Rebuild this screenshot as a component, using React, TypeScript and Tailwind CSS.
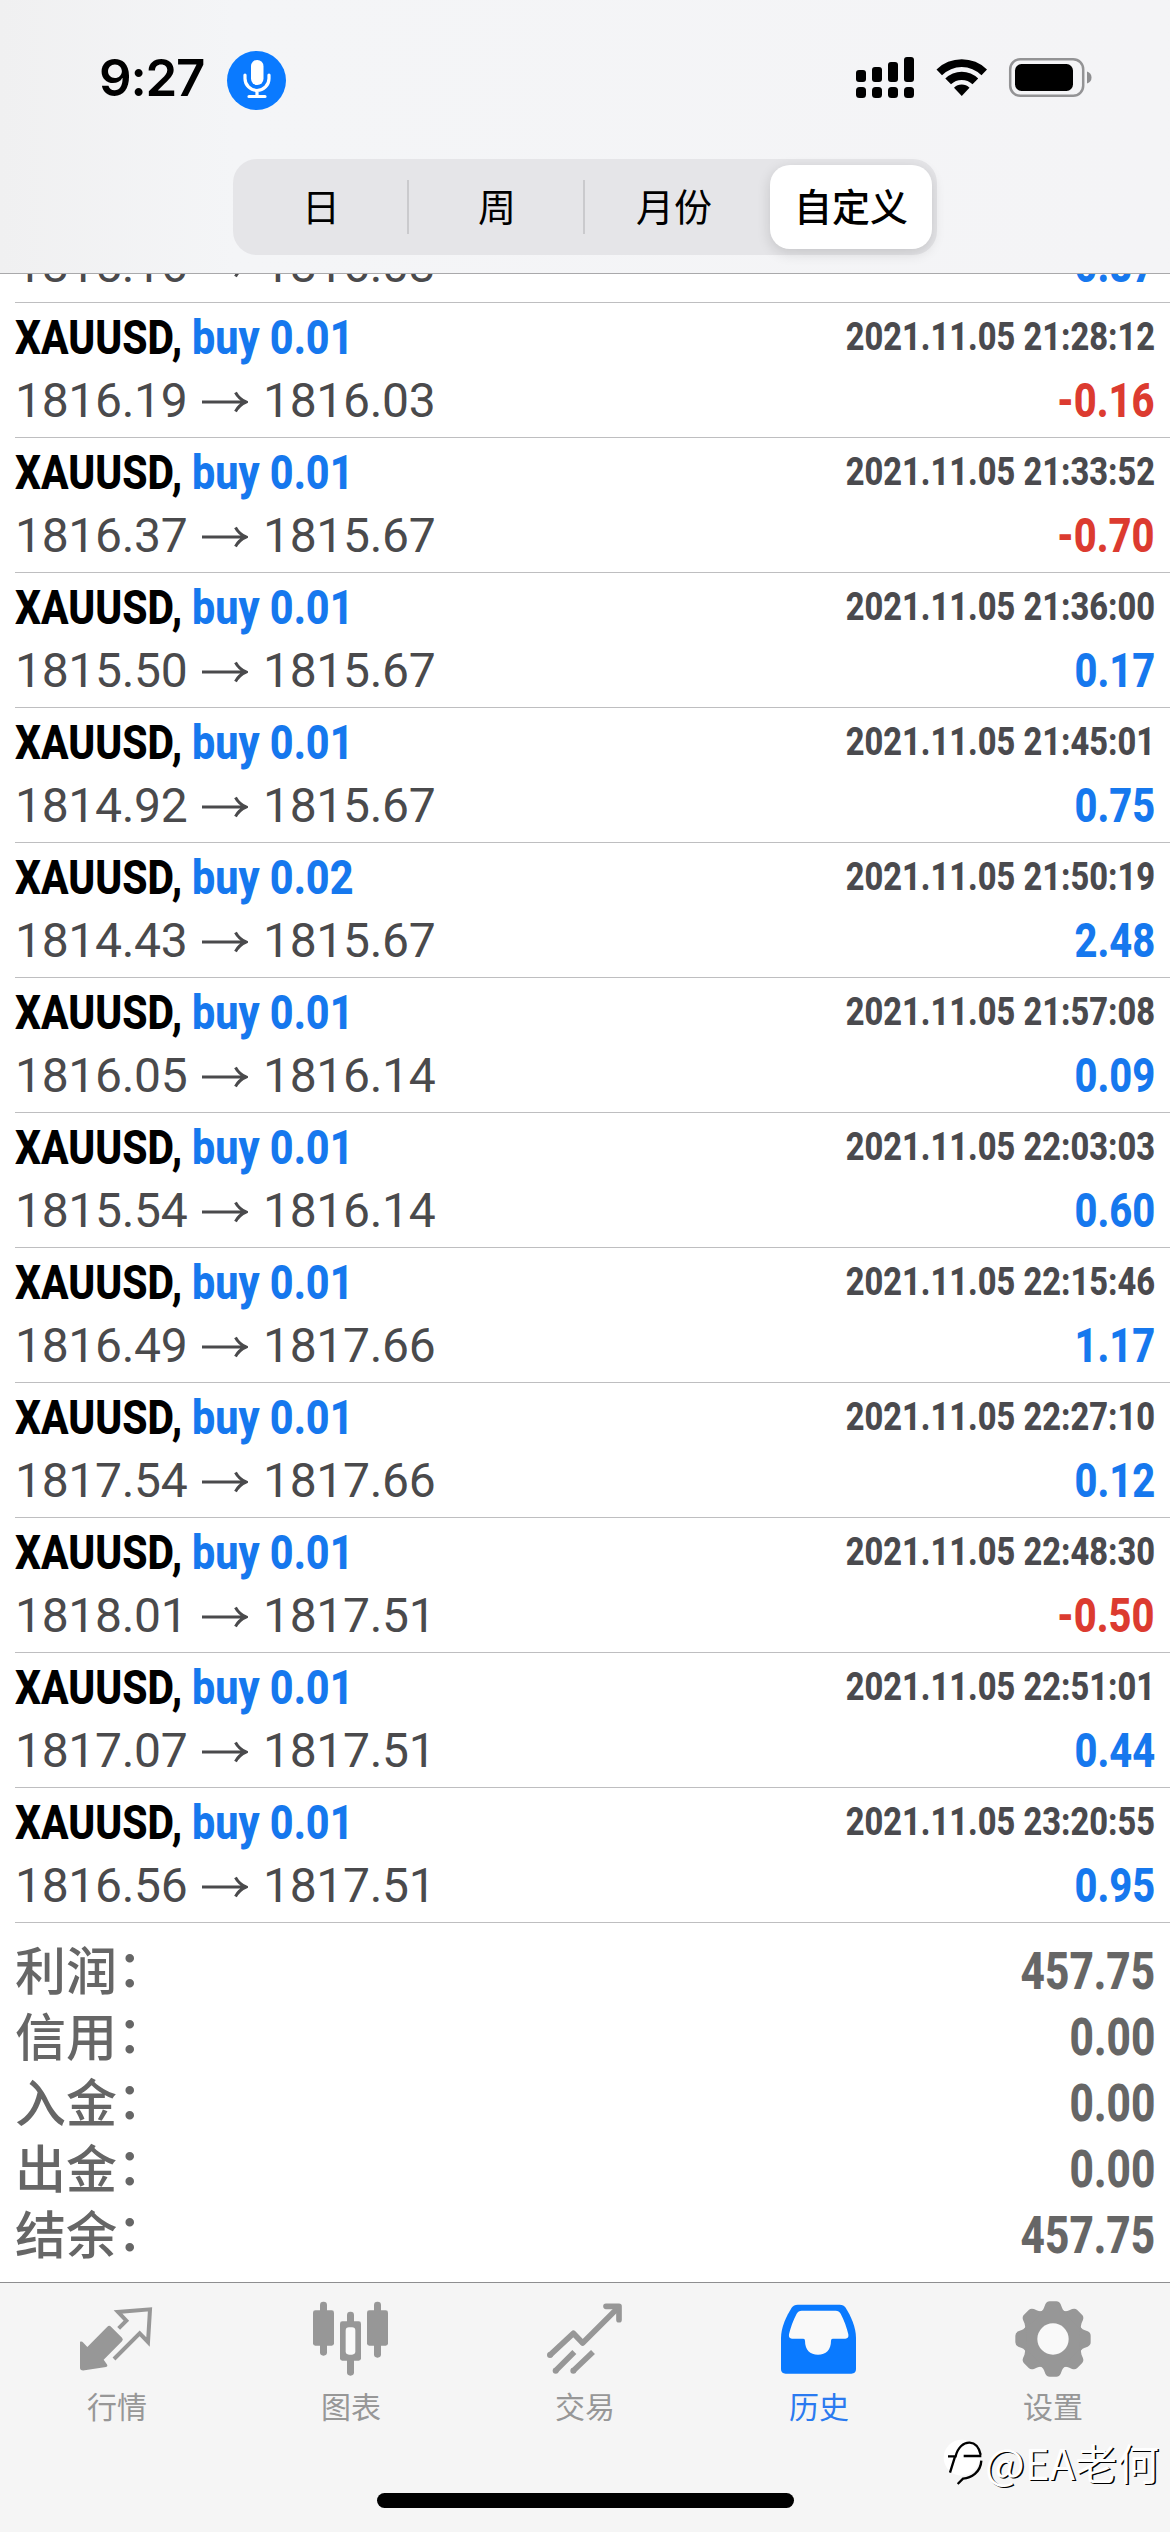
import type { ReactNode } from "react";

type Deal = { vol: string; time: string; open: string; close: string; profit: string };

const deals: Deal[] = [
  { vol: "0.01", time: "2021.11.05 21:28:12", open: "1816.19", close: "1816.03", profit: "-0.16" },
  { vol: "0.01", time: "2021.11.05 21:33:52", open: "1816.37", close: "1815.67", profit: "-0.70" },
  { vol: "0.01", time: "2021.11.05 21:36:00", open: "1815.50", close: "1815.67", profit: "0.17" },
  { vol: "0.01", time: "2021.11.05 21:45:01", open: "1814.92", close: "1815.67", profit: "0.75" },
  { vol: "0.02", time: "2021.11.05 21:50:19", open: "1814.43", close: "1815.67", profit: "2.48" },
  { vol: "0.01", time: "2021.11.05 21:57:08", open: "1816.05", close: "1816.14", profit: "0.09" },
  { vol: "0.01", time: "2021.11.05 22:03:03", open: "1815.54", close: "1816.14", profit: "0.60" },
  { vol: "0.01", time: "2021.11.05 22:15:46", open: "1816.49", close: "1817.66", profit: "1.17" },
  { vol: "0.01", time: "2021.11.05 22:27:10", open: "1817.54", close: "1817.66", profit: "0.12" },
  { vol: "0.01", time: "2021.11.05 22:48:30", open: "1818.01", close: "1817.51", profit: "-0.50" },
  { vol: "0.01", time: "2021.11.05 22:51:01", open: "1817.07", close: "1817.51", profit: "0.44" },
  { vol: "0.01", time: "2021.11.05 23:20:55", open: "1816.56", close: "1817.51", profit: "0.95" },
];

const totals = [
  ["利润", "457.75"],
  ["信用", "0.00"],
  ["入金", "0.00"],
  ["出金", "0.00"],
  ["结余", "457.75"],
];

function PriceLine({ open, close, profit }: { open: string; close: string; profit: string }) {
  return (
    <div className="flex h-[60px] items-center justify-between pr-[15px] text-[48px] leading-[60px]">
      <div className="flex items-center tracking-[-0.3px] text-[#4a4a4c]">
        <span className="w-[187px]">{open}</span>
        <svg viewBox="0 0 46 22" className="mt-[2px] mr-[15px] h-[22px] w-[46px]" fill="none" stroke="#4a4a4c" strokeWidth="3">
          <path d="M0 11H44M33.500 1.500Q37 8 44 11Q37 14 33.500 20.500" />
        </svg>
        <span>{close}</span>
      </div>
      <span
        className={`origin-right scale-x-[0.83] font-extrabold ${profit.startsWith("-") ? "text-[#dc3b30]" : "text-[#1678ee]"}`}
      >
        {profit}
      </span>
    </div>
  );
}

function DealRow({ deal }: { deal: Deal }) {
  return (
    <div className="ml-[15px] h-[135px] shrink-0 border-b border-[#bebec0] pt-[4px]">
      <div className="flex h-[64px] items-start justify-between pr-[15px] font-extrabold leading-[62px]">
        <div className="flex text-[48px]">
          <span className="w-[177px] origin-left scale-x-[0.85] whitespace-nowrap text-black">XAUUSD,</span>
          <span className="origin-left scale-x-[0.86] whitespace-nowrap text-[#1678ee]">buy {deal.vol}</span>
        </div>
        <span className="-mt-px origin-right scale-x-[0.825] whitespace-nowrap text-[39.5px] font-extrabold text-[#4a4a4e]">
          {deal.time}
        </span>
      </div>
      <PriceLine open={deal.open} close={deal.close} profit={deal.profit} />
    </div>
  );
}

function StatusBar() {
  const bars = [70, 67, 62, 57];
  return (
    <div className="flex h-[159px] items-start">
      <div className="ml-[99px] mt-[48px] w-[128px] font-['Inter'] text-[51px] font-semibold leading-[60px] tracking-[-1.2px] text-black">
        9:27
      </div>
      <div className="mt-[51px] flex size-[59px] items-center justify-center rounded-full bg-[#0a7aff]">
        <svg viewBox="0 0 59 59" className="size-[59px]" fill="none" stroke="white">
          <rect x="24" y="9" width="12.5" height="25" rx="6.2" fill="white" stroke="none" />
          <path d="M18 24v3.5a12 12 0 0 0 24 0V24M30 39.5v6M22 45.5h16" strokeWidth="3.2" strokeLinecap="round" />
        </svg>
      </div>
      <svg viewBox="850 50 250 60" className="ml-[564px] mt-[50px] h-[60px] w-[250px]">
        {bars.map((top, i) => (
          <g key={top}>
            <rect x={856 + i * 16} y={top} width="10" height={82 - top} rx="3" />
            <rect x={856 + i * 16} y="87" width="10" height="11" rx="3.5" />
          </g>
        ))}
        <path d="M936.500 69.500 A36 36 0 0 1 987 69.500 L981.500 75.200 A28 28 0 0 0 942 75.200 Z" />
        <path d="M945.300 78.600 A23.300 23.300 0 0 1 978.200 78.600 L972.500 84.300 A15.500 15.500 0 0 0 951 84.300 Z" />
        <path d="M954 87.800 A11 11 0 0 1 969.500 87.800 L961.750 96 Z" />
        <rect x="1010.200" y="59.200" width="73" height="36.600" rx="10" fill="none" stroke="#939395" strokeWidth="2.500" />
        <rect x="1015" y="64" width="58" height="27" rx="6.500" />
        <path d="M1087 71.500 Q1091.500 73 1091.500 77.500 T1087 83.500Z" fill="#8e8e90" />
      </svg>
    </div>
  );
}

function Segments() {
  return (
    <div className="mx-auto flex h-[96px] w-[704px] rounded-[24px] bg-[#e5e5e8] font-['Noto_Sans_CJK_SC'] text-[38px] text-black">
      {["日", "周", "月份"].map((t, i) => (
        <div key={t} className="flex w-[176px] items-center justify-center">
          <span className="flex-1 pb-[5px] pl-[2px] text-center">{t}</span>
          {i < 2 && <span className="h-[54px] w-[2px] bg-[#cacacd]" />}
        </div>
      ))}
      <div className="ml-[9px] mt-[6px] flex h-[84px] w-[162px] items-center justify-center rounded-[20px] bg-white pb-[5px] font-medium shadow-[0_4px_14px_rgba(0,0,0,0.14)]">
        自定义
      </div>
    </div>
  );
}

const icons: Record<string, ReactNode> = {
  quotes: (
    <svg viewBox="237 94 228 228" className="size-[76px]" fill="#979797">
      <path d="M240 216Q246 214 250 219L262 232L322 171Q328 166 333 171L366 204Q371 209 366 215L311 270L320 283Q325 290 318 292L254 302Q240 304 240 294Z" />
      <path
        d="M356 176L379 153L354 127L450 119L444 217L419 191L342 268"
        fill="none"
        stroke="#979797"
        strokeWidth="12"
      />
    </svg>
  ),
  chart: (
    <svg viewBox="939 94 228 228" className="size-[76px]" fill="#979797">
      <rect x="939" y="122" width="63" height="106" rx="7" />
      <rect x="960" y="96" width="21" height="162" rx="10" />
      <rect x="1101" y="122" width="63" height="106" rx="7" />
      <rect x="1122" y="96" width="21" height="168" rx="10" />
      <rect x="1041" y="126" width="21" height="192" rx="10" />
      <rect x="1020" y="155" width="63" height="118" rx="7" />
      <rect x="1037" y="173" width="29" height="82" rx="10" fill="#f9f9f9" />
    </svg>
  ),
  trade: (
    <svg viewBox="201 94 228 228" className="size-[76px]" fill="none" stroke="#979797" strokeWidth="17">
      <path d="M209 257L280 191L308 220L414 114" strokeLinejoin="round" />
      <path d="M378 110H417V150" strokeLinejoin="round" strokeLinecap="round" />
      <path d="M226 304L283 247M279 304L339 247" />
      <g fill="#979797" stroke="none">
        <circle cx="210" cy="256" r="9" />
        <circle cx="227" cy="303" r="9" />
        <circle cx="280" cy="303" r="9" />
      </g>
    </svg>
  ),
  history: (
    <svg viewBox="903 94 228 228" className="size-[76px]">
      <path
        d="M953 105H1079Q1091 105 1097 114C1112 138 1128 172 1128 205V298Q1128 312 1114 312H917Q903 312 903 298V205C903 172 920 138 935 114Q941 105 953 105Z"
        fill="#0a7aff"
      />
      <path
        d="M965 123H1067Q1077 123 1082 132C1092 151 1101 175 1105 194Q1107 207 1096 207H1058Q1053 207 1053 213C1053 240 1038 255 1014 255S975 240 975 213Q975 207 970 207H936Q925 207 927 194C931 175 940 151 950 132Q955 123 965 123Z"
        fill="#f9f9f9"
      />
    </svg>
  ),
  settings: (
    <svg viewBox="-114 -114 228 228" className="size-[76px]" fill="#979797">
      <circle r="90" />
      {[0, 45, 90, 135, 180, 225, 270, 315].map((a) => (
        <path
          key={a}
          transform={`rotate(${a})`}
          d="M-42 -80Q-31 -83 -27 -94L-23 -104Q-19 -113 -10 -113H10Q19 -113 23 -104L27 -94Q31 -83 42 -80Z"
        />
      ))}
      <circle r="47" fill="#f9f9f9" />
    </svg>
  ),
};

const tabs = [
  { id: "quotes", label: "行情" },
  { id: "chart", label: "图表" },
  { id: "trade", label: "交易" },
  { id: "history", label: "历史" },
  { id: "settings", label: "设置" },
];

export default function App() {
  return (
    <div className="relative flex h-[2532px] w-[1170px] flex-col overflow-hidden bg-white font-['Roboto','Noto_Sans_CJK_SC',sans-serif]">
      <header className="h-[274px] shrink-0 border-b border-[#a9a9ab] bg-linear-to-r from-[#f0f0f1] via-[#f4f5f7] via-20% to-[#f4f4f6]">
        <StatusBar />
        <Segments />
      </header>

      <main className="flex flex-1 flex-col">
        <div className="ml-[15px] flex h-[29px] shrink-0 flex-col justify-end overflow-hidden border-b border-[#bebec0] pb-[6px]">
          <PriceLine open="1815.16" close="1816.03" profit="0.87" />
        </div>
        {deals.map((d) => (
          <DealRow key={d.time} deal={d} />
        ))}
        <div className="px-[15px] pt-[16px] text-[#666666]">
          {totals.map(([label, value]) => (
            <div key={label} className="flex h-[66px] items-center justify-between text-[51px] leading-[66px]">
              <span className="-mt-[9px] flex font-['Noto_Sans_CJK_SC'] font-medium leading-[60px]">
                {label}
                <span className="-mt-[3px]">：</span>
              </span>
              <span className="origin-right scale-x-[0.83] font-extrabold">{value}</span>
            </div>
          ))}
        </div>
      </main>

      <footer className="flex h-[250px] shrink-0 flex-col items-center border-t border-[#8e8e90] bg-[#f5f5f5]">
        <nav className="grid w-full grid-cols-5 pt-[18px]">
          {tabs.map((t) => (
            <div key={t.id} className="flex flex-col items-center">
              {icons[t.id]}
              <span
                className={`mt-[6px] font-['Noto_Sans_CJK_SC'] text-[30px] leading-[44px] ${t.id === "history" ? "text-[#2a7af0]" : "text-[#979797]"}`}
              >
                {t.label}
              </span>
            </div>
          ))}
        </nav>
        <div className="mt-[66px] h-[15px] w-[417px] rounded-full bg-black" />
      </footer>

      <div className="absolute bottom-[45px] right-[11px] flex items-center">
        <svg viewBox="184 525 120 150" className="mr-[2px] h-[50px] w-[40px]" fill="none">
          <circle cx="240" cy="587" r="54" fill="white" />
          <path
            d="M205 632L220 584M199 583H222C228 556 246 541 264 542S292 556 297 578M246 582H299M299 596C297 632 268 648 244 650L228 666"
            stroke="black"
            strokeWidth="7"
          />
        </svg>
        <span className="font-['Noto_Sans_CJK_SC'] text-[42px] font-normal leading-[50px] text-white [text-shadow:1.5px_1px_0.5px_#000]">
          @EA老何
        </span>
      </div>
    </div>
  );
}
